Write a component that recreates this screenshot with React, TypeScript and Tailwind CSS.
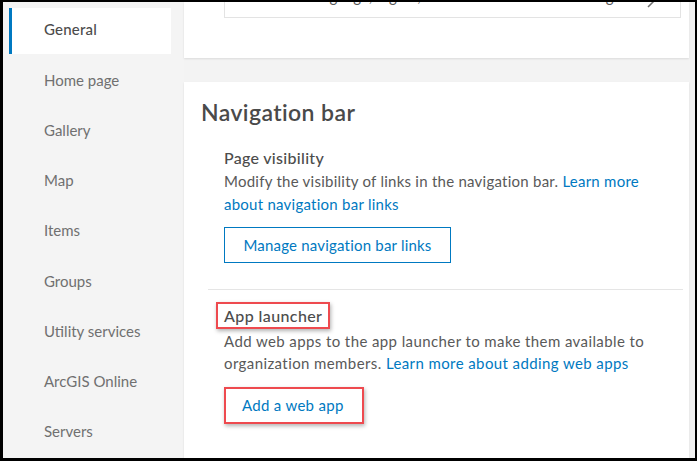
const navItems = [
  "General",
  "Home page",
  "Gallery",
  "Map",
  "Items",
  "Groups",
  "Utility services",
  "ArcGIS Online",
  "Servers",
];

function Sidebar() {
  return (
    <div className="w-[181px] shrink-0 bg-[#f4f4f4] pt-[4px] pl-[6px] pr-[13px]">
      {navItems.map((item, i) => (
        <div key={item} className="h-[50.25px] py-[2px]">
          {i === 0 ? (
            <div className="h-full flex items-center bg-white border-l-[3px] border-[#0079c1] pl-[32px] pb-[3px] text-[15px] font-medium tracking-[0.2px] text-[#4c4c4c]">
              {item}
            </div>
          ) : (
            <div className="h-full flex items-center pl-[35px] pb-[3px] text-[15px] text-[#707070]">
              {item}
            </div>
          )}
        </div>
      ))}
    </div>
  );
}

function Highlight({ children, className }: { children: React.ReactNode; className: string }) {
  return (
    <div className={"inline-flex items-center border-[2.5px] border-[#ee4a4f] shadow-[1px_2px_4px_rgba(0,0,0,0.3)] " + className}>
      {children}
    </div>
  );
}

export default function App() {
  return (
    <div
      className="w-[697px] h-[461px] overflow-hidden border-black border-t-2 border-l-[3px] border-r-2 border-b-[3px] flex"
      style={{ fontFamily: "Lato, 'Noto Sans', sans-serif" }}
    >
      <Sidebar />
      <div className="flex-1 bg-[#f3f3f3] pr-[6px] flex flex-col">
        {/* previous card, scrolled mostly out of view */}
        <div className="h-[56px] shrink-0 bg-white shadow-[0_1px_2px_rgba(0,0,0,0.1)] pl-[40px] pr-[8px]">
          <div className="h-[16px] border border-t-0 border-[#e3e3e3] overflow-hidden relative">
            <div className="absolute -top-[16px] left-[60px] text-[15px] leading-[20px] text-[#595959] whitespace-nowrap">
              Set language, region, format and time zone settings
            </div>
            <svg className="absolute -top-[6px] right-[24px]" width="10" height="12" viewBox="0 0 10 12">
              <path d="M2 1l5 5-5 5" fill="none" stroke="#6e6e6e" strokeWidth="1.5" />
            </svg>
          </div>
        </div>

        <div className="mt-[24px] flex-1 bg-white shadow-[0_1px_2px_rgba(0,0,0,0.1)] pt-[16px]">
          <h2 className="pl-[17px] text-[23px] leading-[29px] font-semibold tracking-[0.4px] text-[#4a4a4a]">Navigation bar</h2>

          <div className="pl-[40px] pr-[40px] mt-[20px] tracking-[0.25px]">
            <div className="text-[16px] leading-[22px] font-medium tracking-[0.3px] text-[#4c4c4c]">Page visibility</div>
            <p className="text-[15px] leading-[23px] text-[#595959] mt-[1px]">
              Modify the visibility of links in the navigation bar.{" "}
              <span className="text-[#0079c1]">Learn more about navigation bar links</span>
            </p>
            <button className="mt-[11px] h-[36px] w-[227px] border border-[#0079c1] text-[15px] tracking-[0.2px] text-[#0079c1] bg-white">
              Manage navigation bar links
            </button>
          </div>

          <div className="ml-[24px] mr-[6px] mt-[26px] border-t border-[#e5e5e5]" />

          <div className="pl-[32px] pr-[40px] mt-[12px]">
            <Highlight className="h-[27px] px-[6px]">
              <span className="text-[16px] font-medium tracking-[0.4px] text-[#4c4c4c]">App launcher</span>
            </Highlight>
            <p className="pl-[8px] mt-[1px] text-[15px] leading-[22px] tracking-[0.4px] text-[#595959]">
              Add web apps to the app launcher to make them available to organization members.{" "}
              <span className="text-[#0079c1]">Learn more about adding web apps</span>
            </p>
            <div className="pl-[8px] mt-[13px]">
              <Highlight className="h-[37px] w-[140px] pl-[16px]">
                <span className="text-[15px] tracking-[0.3px] text-[#0079c1]">Add a web app</span>
              </Highlight>
            </div>
          </div>
        </div>
      </div>
    </div>
  );
}
